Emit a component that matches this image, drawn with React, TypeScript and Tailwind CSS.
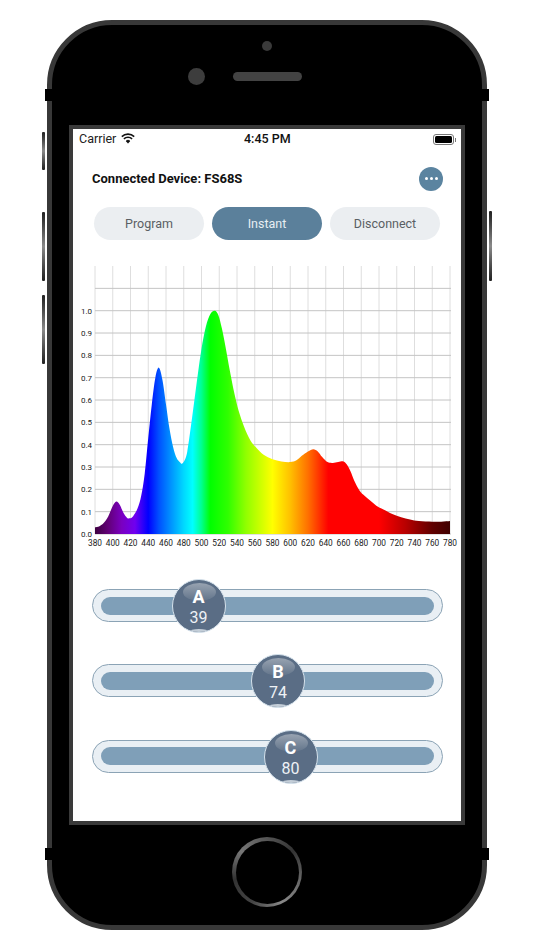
const data: [number, number][] = [
  [380, 0.03], [385, 0.035], [390, 0.05], [395, 0.08], [400, 0.125], [404, 0.145], [408, 0.13], [412, 0.095], [416, 0.073], [419, 0.07],
  [423, 0.08], [428, 0.115], [432, 0.17], [436, 0.27], [440, 0.43], [444, 0.58], [448, 0.7], [452, 0.745], [456, 0.69], [460, 0.58],
  [464, 0.47], [468, 0.39], [472, 0.34], [476, 0.32], [478, 0.315], [481, 0.33], [484, 0.37], [488, 0.48], [492, 0.6], [496, 0.72],
  [500, 0.83], [505, 0.93], [510, 0.985], [515, 1.0], [519, 0.98], [523, 0.92], [527, 0.84], [532, 0.73], [537, 0.63], [542, 0.55],
  [548, 0.48], [555, 0.42], [562, 0.385], [570, 0.355], [580, 0.335], [590, 0.325], [600, 0.322], [607, 0.33], [613, 0.35], [620, 0.37],
  [626, 0.38], [631, 0.37], [636, 0.345], [642, 0.322], [648, 0.318], [654, 0.322], [660, 0.325], [664, 0.31], [668, 0.28], [672, 0.24],
  [678, 0.195], [684, 0.17], [690, 0.15], [697, 0.127], [705, 0.11], [715, 0.09], [725, 0.075], [735, 0.065], [745, 0.058], [760, 0.055], [770, 0.055], [780, 0.058],
];

const X0 = 95;
const XW = 355;
const Y0 = 534;
const YH = 223.3;
const px = (nm: number) => X0 + ((nm - 380) / 400) * XW;
const py = (v: number) => Y0 - v * YH;

function curve(): string {
  const p = data.map(([n, v]) => [px(n), py(v)]);
  let d = `M${px(380)} ${Y0} L${p[0][0]} ${p[0][1]}`;
  for (let i = 0; i < p.length - 1; i++) {
    const a = p[Math.max(i - 1, 0)];
    const b = p[i];
    const c = p[i + 1];
    const e = p[Math.min(i + 2, p.length - 1)];
    d += ` C${b[0] + (c[0] - a[0]) / 6} ${b[1] + (c[1] - a[1]) / 6} ${c[0] - (e[0] - b[0]) / 6} ${c[1] - (e[1] - b[1]) / 6} ${c[0]} ${c[1]}`;
  }
  return d + ` L${px(780)} ${Y0} Z`;
}

const stops: [number, string][] = [
  [380, "#3d0040"], [395, "#620078"], [410, "#7a00c0"], [425, "#7000f0"], [440, "#0000ff"], [452, "#0050ff"], [465, "#0090ff"], [480, "#00d8ff"],
  [490, "#00ffff"], [500, "#00ff90"], [510, "#00ff00"], [530, "#30ff00"], [550, "#90ff00"], [580, "#ffff00"], [600, "#ffc000"], [620, "#ff7000"],
  [643, "#ff0000"], [700, "#ff0000"], [730, "#b80000"], [760, "#600000"], [780, "#400000"],
];

const nms = Array.from({ length: 21 }, (_, i) => 380 + i * 20);
const vals = Array.from({ length: 12 }, (_, i) => i / 10);

function Chart() {
  return (
    <svg viewBox="73 260 388 290" className="block w-[388px] h-[290px] mt-5 shrink-0">
      <defs>
        <linearGradient id="spec" x1={px(380)} x2={px(780)} y1="0" y2="0" gradientUnits="userSpaceOnUse">
          {stops.map(([n, c]) => (
            <stop key={n} offset={(n - 380) / 400} stopColor={c} />
          ))}
        </linearGradient>
      </defs>
      {nms.map((n) => (
        <line key={n} x1={px(n)} x2={px(n)} y1={266} y2={534} stroke="#dedede" strokeWidth={1} />
      ))}
      {vals.map((v) => (
        <line key={v} x1={95} x2={451} y1={py(v)} y2={py(v)} stroke="#c4c4c4" strokeWidth={1} />
      ))}
      <path d={curve()} fill="url(#spec)" />
      {vals.slice(0, 11).map((v) => (
        <text key={v} x={81} y={py(v) + 3} fontSize={8} fill="#222" fontFamily="Roboto, sans-serif">
          {v.toFixed(1)}
        </text>
      ))}
      {nms.map((n) => (
        <text key={n} x={px(n)} y={546} fontSize={8.3} fill="#222" textAnchor="middle" fontFamily="Roboto, sans-serif">
          {n}
        </text>
      ))}
    </svg>
  );
}

function Slider({ letter, value, knob }: { letter: string; value: number; knob: string }) {
  return (
    <div className="relative w-[351px] h-[33px] rounded-full bg-[#e9eff4] border border-[#8ba3b5] flex items-center px-2">
      <div className="w-full h-[18px] rounded-full bg-[#7f9fb8]" />
      <div className={`absolute top-[-11px] w-[54px] h-[54px] rounded-full bg-[#5a6d85] border border-[#d5e2ec] overflow-hidden flex flex-col items-center ${knob}`}>
        <div className="absolute top-[3px] left-[10px] w-[33px] h-[18px] rounded-[50%] bg-gradient-to-b from-[#98a3b1] to-[#62748a]" />
        <div className="absolute bottom-[-18px] left-[8px] w-[36px] h-[21px] rounded-[50%] bg-[#c4ced8]" />
        <span className="relative mt-[6px] text-[18px] leading-[22px] font-bold text-white">{letter}</span>
        <span className="relative mt-[1px] text-[16px] leading-[18px] text-[#eef2f6]">{value}</span>
      </div>
    </div>
  );
}

function Wifi() {
  return (
    <svg width="14" height="11" viewBox="0 0 14 11" fill="none" stroke="#111" className="mt-[-2px]">
      <path d="M0.8 3.6 A9 9 0 0 1 13.2 3.6" strokeWidth="1.6" />
      <path d="M2.9 5.8 A6 6 0 0 1 11.1 5.8" strokeWidth="1.6" />
      <path d="M5 8 A3 3 0 0 1 9 8 L7 10.2 Z" fill="#111" strokeWidth="0.6" />
    </svg>
  );
}

function Battery() {
  return (
    <div className="flex items-center">
      <div className="w-[21px] h-[11px] rounded-[3px] border border-[#777] p-[1px]">
        <div className="w-full h-full rounded-[1.5px] bg-black" />
      </div>
      <div className="w-[1px] h-[4px] bg-[#777] ml-[1px]" />
    </div>
  );
}

const tabs = [
  { label: "Program", cls: "bg-[#ebeef1] text-[#5a5f64]" },
  { label: "Instant", cls: "bg-[#5b809b] text-[#e8eef2]" },
  { label: "Disconnect", cls: "bg-[#ebeef1] text-[#5a5f64]" },
];

const sliders = [
  { letter: "A", value: 39, knob: "left-[79px]" },
  { letter: "B", value: 74, knob: "left-[158.5px]" },
  { letter: "C", value: 80, knob: "left-[171px]" },
];

const btn = "absolute w-[3px] bg-gradient-to-b from-[#222] via-[#8a8a8a] to-[#222] rounded-[1px]";

export default function App() {
  return (
    <div className="w-[534px] h-[950px] bg-white pt-5 pl-[47px] overflow-hidden font-['Roboto',sans-serif]">
      <div className="relative w-[440px] h-[910px]">
        <div className={`${btn} left-[-5px] top-[112px] h-[38px]`} />
        <div className={`${btn} left-[-5px] top-[192px] h-[69px]`} />
        <div className={`${btn} left-[-5px] top-[275px] h-[69px]`} />
        <div className={`${btn} right-[-5px] top-[191px] h-[70px]`} />

        <div className="w-full h-full rounded-[65px] bg-black border-[5px] border-[#383838] flex flex-col">
          <div className="h-[100px] shrink-0 flex flex-col items-center pt-4">
            <div className="w-[10px] h-[10px] rounded-full bg-[#3a3a3a]" />
            <div className="w-full flex items-center pl-[135.5px] mt-[16.5px]">
              <div className="w-[17px] h-[17px] rounded-full bg-[#3d3d3d]" />
              <div className="w-[69px] h-[9px] rounded-full bg-[#434343] ml-[28.5px]" />
            </div>
          </div>

          <div className="mx-[17px] h-[700px] shrink-0 border-4 border-[#3a3a3a] bg-white flex flex-col items-center">
            <div className="w-full h-[21px] shrink-0 flex items-center justify-between pl-[6px] pr-[5px] relative">
              <div className="flex items-center gap-[5px] text-[12.5px] text-[#222]">
                <span>Carrier</span>
                <Wifi />
              </div>
              <span className="absolute left-[171px] text-[12.5px] font-medium text-[#111]">4:45 PM</span>
              <Battery />
            </div>

            <div className="w-full h-6 mt-[16.5px] shrink-0 flex items-center justify-between pl-[19px] pr-[18px]">
              <span className="text-[13px] font-bold text-[#111]">Connected Device: FS68S</span>
              <div className="w-6 h-6 rounded-full bg-[#5b84a0] flex items-center justify-center gap-[2px]">
                <div className="w-[3px] h-[3px] rounded-full bg-white" />
                <div className="w-[3px] h-[3px] rounded-full bg-white" />
                <div className="w-[3px] h-[3px] rounded-full bg-white" />
              </div>
            </div>

            <div className="flex gap-2 mt-[16.5px] shrink-0">
              {tabs.map((t) => (
                <div key={t.label} className={`w-[110px] h-[33px] pt-[2px] rounded-full flex items-center justify-center text-[12.5px] ${t.cls}`}>
                  {t.label}
                </div>
              ))}
            </div>

            <Chart />

            <div className="flex flex-col gap-[42.3px] mt-[39px]">
              {sliders.map((s) => (
                <Slider key={s.letter} {...s} />
              ))}
            </div>
          </div>

          <div className="flex-1 flex items-center justify-center pb-[6px]">
            <div className="w-[70px] h-[70px] rounded-full p-[3.5px] bg-[conic-gradient(#555,#333,#666,#888,#444,#333,#777,#555)]">
              <div className="w-full h-full rounded-full bg-black" />
            </div>
          </div>
        </div>

        <div className="absolute left-[-2px] top-[69px] w-[7px] h-[12px] bg-black" />
        <div className="absolute right-[-2px] top-[69px] w-[7px] h-[12px] bg-black" />
        <div className="absolute left-[-2px] top-[828px] w-[7px] h-[12px] bg-black" />
        <div className="absolute right-[-2px] top-[828px] w-[7px] h-[12px] bg-black" />
      </div>
    </div>
  );
}
